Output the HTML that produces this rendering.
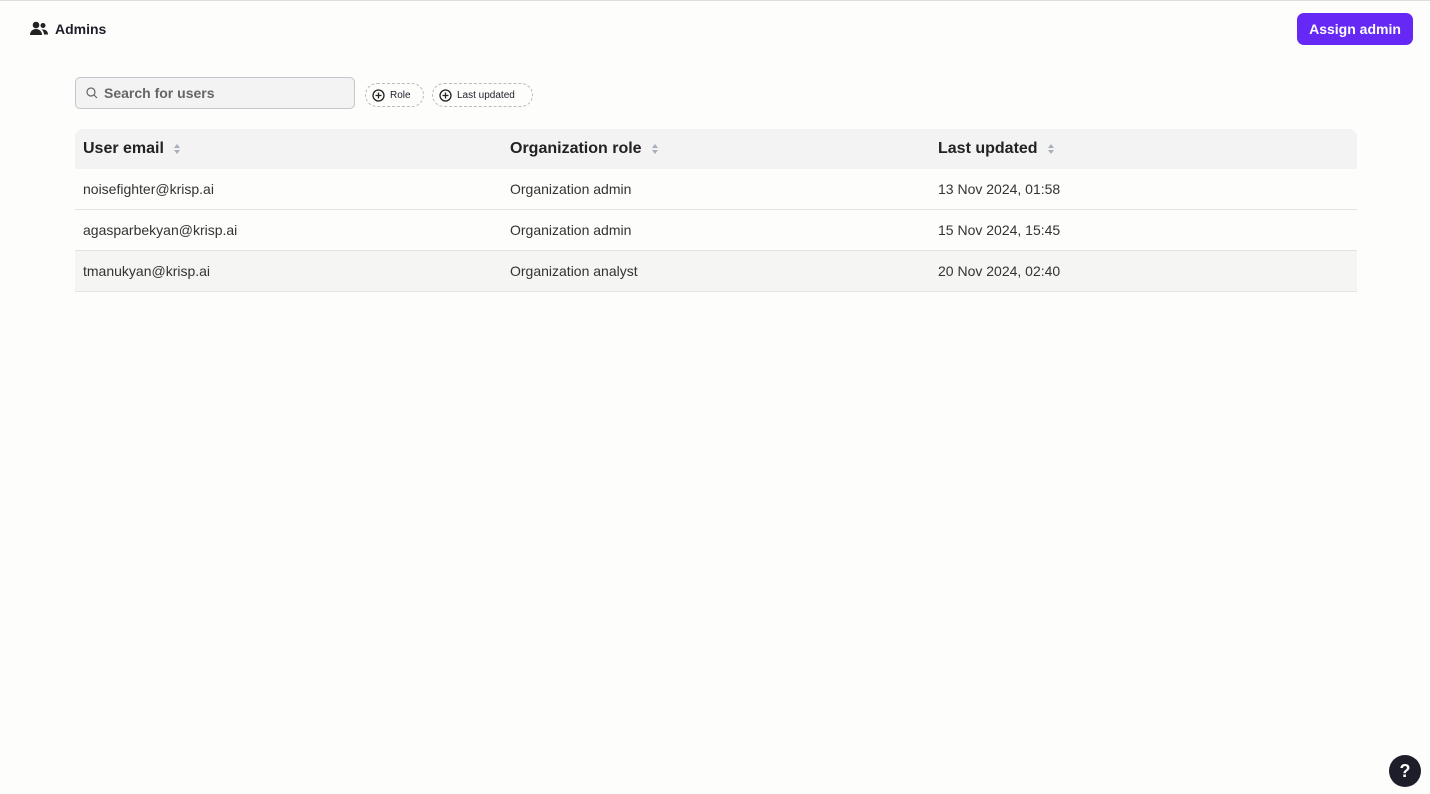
<!DOCTYPE html>
<html><head><style>
body{margin:0;width:1430px;height:794px;background:#fdfdfc;font-family:"Liberation Sans",sans-serif;color:#1f1f2b;position:relative;overflow:hidden}
.top{position:absolute;top:0;left:0;right:0;height:1px;background:#ddd}
.title{position:absolute;left:30px;top:21px;font-size:14px;font-weight:bold;display:flex;align-items:center;gap:7px}
.btn{position:absolute;left:1297px;top:13px;width:116px;height:32px;background:#6528f5;color:#fff;border-radius:7px;font-size:14px;font-weight:bold;display:flex;align-items:center;justify-content:center}
.search{position:absolute;left:75px;top:77px;width:280px;height:32px;border:1px solid #c5c5cc;border-radius:5px;background:#f3f3f3;font-size:14px;font-weight:bold;color:#666;display:flex;align-items:center;gap:6px;padding-left:10px;box-sizing:border-box}
.chip{position:absolute;top:83px;height:24px;border:1px dashed #bbb;border-radius:12px;font-size:10px;display:flex;align-items:center;gap:5px;padding:0 10px 0 6px;box-sizing:border-box}
.table{position:absolute;left:75px;top:129px;width:1282px}
.row{height:41px;box-sizing:border-box;border-bottom:1px solid #e3e3e3;display:flex;align-items:center;font-size:14px;color:#333}
.hd{height:40px;background:#f3f3f3;border-radius:8px 8px 0 0;border:none;font-size:16px;font-weight:bold;color:#222}
.c1{width:427px;padding-left:8px;box-sizing:border-box}.c2{width:427px;padding-left:8px;box-sizing:border-box}.c3{padding-left:9px}
.s{display:inline-block;margin-left:9px;vertical-align:middle}
.help{position:absolute;left:1389px;top:755px;width:32px;height:32px;border-radius:50%;background:#1e1e2a;color:#fff;font-weight:bold;font-size:18px;display:flex;align-items:center;justify-content:center}
</style></head><body>
<div class="top"></div>
<div class="title"><svg width="18" height="16" viewBox="0 0 18 16"><circle cx="6" cy="4" r="3.3" fill="#222"/><path d="M0 14c0-4 3-6 6-6s6 2 6 6z" fill="#222"/><circle cx="13" cy="4.5" r="2.5" fill="#222"/><path d="M13 8.5c3 0 5 2 5 5h-4c0-2-1-4-2.5-5z" fill="#222"/></svg>Admins</div>
<div class="btn">Assign admin</div>
<div class="search"><svg width="12" height="12" viewBox="0 0 12 12"><circle cx="5" cy="5" r="4" fill="none" stroke="#666" stroke-width="1.2"/><path d="M8 8l3 3" stroke="#666" stroke-width="1.2"/></svg>Search for users</div>
<div class="chip" style="left:365px;width:59px"><svg width="13" height="13" viewBox="0 0 13 13"><circle cx="6.5" cy="6.5" r="5.5" fill="none" stroke="#222" stroke-width="1.3"/><path d="M6.5 3.5v6M3.5 6.5h6" stroke="#222" stroke-width="1.3"/></svg>Role</div>
<div class="chip" style="left:432px;width:101px"><svg width="13" height="13" viewBox="0 0 13 13"><circle cx="6.5" cy="6.5" r="5.5" fill="none" stroke="#222" stroke-width="1.3"/><path d="M6.5 3.5v6M3.5 6.5h6" stroke="#222" stroke-width="1.3"/></svg>Last updated</div>
<div class="table">
<div class="row hd"><div class="c1">User email<svg class="s" width="8" height="12" viewBox="0 0 8 12"><path d="M4 1L7 5H1zM4 11L1 7h6z" fill="#a8aebc"/></svg></div><div class="c2">Organization role<svg class="s" width="8" height="12" viewBox="0 0 8 12"><path d="M4 1L7 5H1zM4 11L1 7h6z" fill="#a8aebc"/></svg></div><div class="c3">Last updated<svg class="s" width="8" height="12" viewBox="0 0 8 12"><path d="M4 1L7 5H1zM4 11L1 7h6z" fill="#a8aebc"/></svg></div></div>
<div class="row"><div class="c1">noisefighter@krisp.ai</div><div class="c2">Organization admin</div><div class="c3">13 Nov 2024, 01:58</div></div>
<div class="row"><div class="c1">agasparbekyan@krisp.ai</div><div class="c2">Organization admin</div><div class="c3">15 Nov 2024, 15:45</div></div>
<div class="row" style="background:#f5f5f4"><div class="c1">tmanukyan@krisp.ai</div><div class="c2">Organization analyst</div><div class="c3">20 Nov 2024, 02:40</div></div>
</div>
<div class="help">?</div>
</body></html>
